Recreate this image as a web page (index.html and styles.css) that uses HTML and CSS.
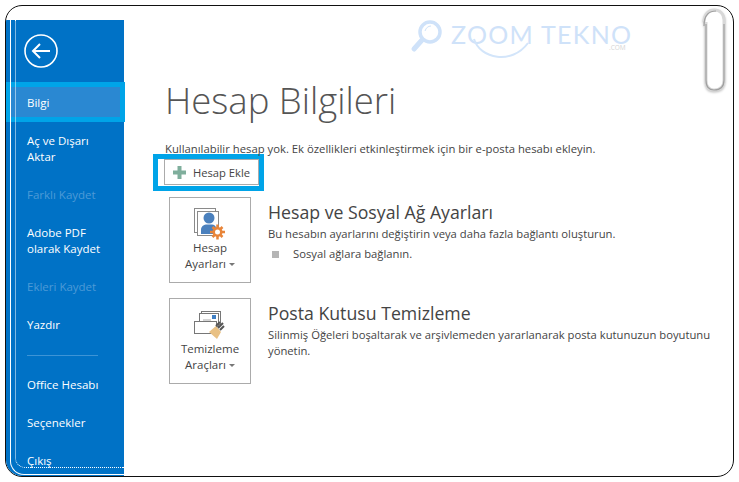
FILE: index.html
```html
<!DOCTYPE html>
<html lang="tr">
<head>
    <meta charset="UTF-8">
    <meta name="viewport" content="width=device-width, initial-scale=1.0">
    <title>Hesap Bilgileri</title>
    <link rel="stylesheet" href="styles.css">
</head>
<body>
    <div class="frame">
        <div class="window">
            <!-- sol menu -->
            <nav class="sidebar">
                <div class="back-area">
                    <svg class="back-icon" width="34" height="34" viewBox="0 0 34 34">
                        <circle cx="17" cy="17" r="16" fill="none" stroke="#fff" stroke-width="1.6"/>
                        <path d="M9 17H26M16 10L9 17L16 24" fill="none" stroke="#fff" stroke-width="2"/>
                    </svg>
                </div>
                <a class="nav-item active">Bilgi</a>
                <a class="nav-item tall">Aç ve Dışarı<br>Aktar</a>
                <a class="nav-item disabled">Farklı Kaydet</a>
                <a class="nav-item tall">Adobe PDF<br>olarak Kaydet</a>
                <a class="nav-item disabled">Ekleri Kaydet</a>
                <a class="nav-item">Yazdır</a>
                <div class="nav-divider"></div>
                <a class="nav-item">Office Hesabı</a>
                <a class="nav-item">Seçenekler</a>
                <a class="nav-item">Çıkış</a>
                <div class="edge-solid"></div>
                <div class="edge-dots"></div>
            </nav>

            <!-- icerik -->
            <main class="content">
                <h1 class="page-title">Hesap Bilgileri</h1>
                <p class="intro">Kullanılabilir hesap yok. Ek özellikleri etkinleştirmek için bir e-posta hesabı ekleyin.</p>
                <div class="add-highlight">
                    <button class="add-button">
                        <svg width="13" height="13" viewBox="0 0 13 13"><path d="M4.500 0H8.500V4.500H13V8.500H8.500V13H4.500V8.500H0V4.500H4.500Z" fill="#7fae9c"/></svg>
                        Hesap Ekle
                    </button>
                </div>

                <section class="block">
                    <div class="big-button">
                        <svg class="big-icon" width="32" height="32" viewBox="0 0 32 32">
                            <rect x="0.500" y="0.500" width="21" height="24" fill="#fff" stroke="#8a8a8a"/>
                            <rect x="3.500" y="3.500" width="21" height="24" fill="#fff" stroke="#8a8a8a"/>
                            <circle cx="15" cy="10" r="5.500" fill="#4a80bd"/>
                            <path d="M7 26V22C7 18 10 16.500 13 16.500H18C20 16.500 22 18 22 20V26Z" fill="#4a80bd"/>
                            <path d="M23.500 16.500V31.500M16 24H31M18.500 19L28.500 29M28.500 19L18.500 29" stroke="#e8853a" stroke-width="2.500"/>
                            <circle cx="23.500" cy="24" r="5" fill="#e8853a"/>
                            <circle cx="23.500" cy="24" r="2.500" fill="#fff"/>
                        </svg>
                        <span class="big-label">Hesap<br>Ayarları<i class="caret"></i></span>
                    </div>
                    <div class="block-text">
                        <h2>Hesap ve Sosyal Ağ Ayarları</h2>
                        <p>Bu hesabın ayarlarını değiştirin veya daha fazla bağlantı oluşturun.</p>
                        <div class="bullet-row"><span class="bullet"></span>Sosyal ağlara bağlanın.</div>
                    </div>
                </section>

                <section class="block">
                    <div class="big-button">
                        <svg class="big-icon" width="32" height="32" viewBox="0 0 32 32">
                            <rect x="7.500" y="2.500" width="19" height="13" fill="#fff" stroke="#777"/>
                            <rect x="5.500" y="4.500" width="19" height="13" fill="#fff" stroke="#777"/>
                            <rect x="18" y="6" width="4" height="4" fill="#3f7fc4"/>
                            <path d="M9 11H17M9 13.500H13" stroke="#aaa"/>
                            <rect x="0.500" y="12.500" width="22" height="12" fill="#fff" stroke="#777"/>
                            <path d="M15 23L22 17L27 23L23 30Z" fill="#e9c184"/>
                            <path d="M22 17L26 13M24 19L29 14M26 21L30 17" stroke="#555" stroke-width="2"/>
                        </svg>
                        <span class="big-label">Temizleme<br>Araçları<i class="caret"></i></span>
                    </div>
                    <div class="block-text">
                        <h2>Posta Kutusu Temizleme</h2>
                        <p>Silinmiş Öğeleri boşaltarak ve arşivlemeden yararlanarak posta kutunuzun boyutunu yönetin.</p>
                    </div>
                </section>
            </main>
        </div>

        <!-- filigran -->
        <div class="watermark">
            <svg class="wm-mark" width="34" height="34" viewBox="0 0 34 34">
                <circle cx="20" cy="13" r="10" fill="none" stroke="#cfe2f9" stroke-width="3.500"/>
                <path d="M12 21L4 30" stroke="#cfe2f9" stroke-width="5" stroke-linecap="round"/>
                <path d="M15 12C16 9 18 7 21 7" fill="none" stroke="#cfe2f9" stroke-width="1"/>
            </svg>
            <span class="wm-text">ZOOM TEKNO</span>
            <span class="wm-com">.COM</span>
            <svg class="wm-swoosh" width="64" height="24" viewBox="0 0 64 24"><path d="M2 2C8 22 40 28 56 6" fill="none" stroke="#d3e5fa" stroke-width="2"/></svg>
        </div>

        <!-- atas -->
        <svg class="clip" width="26" height="86" viewBox="0 0 26 86">
            <path d="M3 14C3 6 8 2 13 2C19 2 23 6 23 12L23 72C23 79 19 82 13 82C8 82 5 79 5 72L5 14" fill="#fff" stroke="#d8d8d8" stroke-width="3"/>
            <path d="M23 16L23 72C23 79 19 82 13 82C8 82 5 79 5 72L5 16" fill="none" stroke="#a0a0a0" stroke-width="1.200"/>
            <path d="M3 18C3 6 9 3 15 3" fill="none" stroke="#a0a0a0" stroke-width="1.200"/>
        </svg>
    </div>
</body>
</html>
```

FILE: styles.css
```css
* {
    margin: 0;
    padding: 0;
    box-sizing: border-box;
    font-family: "Open Sans", "Noto Sans", sans-serif;
}

body {
    background: #fff;
    color: #444;
    width: 739px;
    height: 482px;
    overflow: hidden;
}

.frame {
    position: relative;
    width: 729px;
    height: 472px;
    margin: 5px 0 0 5px;
    padding-top: 14px;
    border: 1px solid #111;
    border-radius: 17px;
    overflow: hidden;
    background: #fff;
}

.window {
    display: flex;
    height: 100%;
}

/* sol menu */
.sidebar {
    position: relative;
    flex: 0 0 118px;
    min-width: 0;
    background: #0072c6;
    color: #fff;
    font-size: 11.5px;
}

.back-area {
    height: 62px;
    padding: 14px 0 0 18px;
}

.back-icon {
    display: block;
}

.nav-item {
    display: block;
    height: 38px;
    padding-left: 21px;
    line-height: 38px;
    white-space: nowrap;
}

.nav-item.tall {
    height: 54px;
    padding-top: 11px;
    line-height: 16px;
}

.nav-item.disabled {
    color: #4d9ad6;
}

.nav-item.active {
    width: 119px;
    height: 40px;
    background: #2a88d2;
    border: 5px solid #00a4e8;
    padding-left: 16px;
    line-height: 31px;
}

.nav-divider {
    width: 71px;
    height: 1px;
    margin: 11px 0 10px 21px;
    background: #3d94d6;
}

.edge-solid {
    position: absolute;
    left: 4px;
    top: 0;
    right: 0;
    bottom: 1px;
    border-left: 1px solid #fff;
    border-bottom: 1px solid #fff;
    border-bottom-left-radius: 14px;
    pointer-events: none;
}

.edge-dots {
    position: absolute;
    left: 9px;
    top: 0;
    right: 0;
    bottom: 8px;
    border-left: 1px dotted #fff;
    border-bottom: 1px dotted #fff;
    border-bottom-left-radius: 10px;
    pointer-events: none;
}

/* icerik */
.content {
    flex: 1;
    padding: 55px 0 0 41px;
}

.page-title {
    font-size: 36.5px;
    font-weight: 300;
    line-height: 50px;
    color: #555;
}

.intro {
    margin-top: 16px;
    font-size: 11.3px;
    line-height: 16px;
}

.add-highlight {
    width: 111px;
    height: 37px;
    margin: -3px 0 0 -12px;
    padding-left: 6px;
    border: 5px solid #00a4e8;
    background: #fff;
}

.add-button {
    display: flex;
    align-items: center;
    gap: 7px;
    width: 95px;
    height: 26px;
    padding-left: 8px;
    border: 1px solid #ababab;
    background: #fff;
    color: #444;
    font-size: 11.2px;
}

.block {
    display: flex;
    margin: 6px 0 15px 4px;
}

.big-button {
    display: flex;
    flex-direction: column;
    align-items: center;
    flex: 0 0 82px;
    height: 86px;
    padding-top: 10px;
    border: 1px solid #ababab;
    font-size: 11.5px;
    text-align: center;
}

.big-icon {
    display: block;
}

.big-label {
    line-height: 16px;
    color: #444;
}

.caret {
    display: inline-block;
    margin-left: 3px;
    vertical-align: middle;
    border-left: 3px solid transparent;
    border-right: 3px solid transparent;
    border-top: 3px solid #777;
}

.block-text {
    width: 445px;
    margin-left: 17px;
    font-size: 11.25px;
    line-height: 16px;
}

.block-text h2 {
    margin-top: 2px;
    margin-bottom: 1px;
    font-size: 17.7px;
    font-weight: 400;
    line-height: 26px;
    color: #444;
}

.bullet-row {
    display: flex;
    align-items: center;
    margin-top: 4px;
}

.bullet {
    width: 7px;
    height: 7px;
    margin: 0 14px 0 4px;
    background: #b5b5b5;
}

/* filigran ve atas */
.watermark {
    position: absolute;
    left: 404px;
    top: 13px;
    width: 220px;
    height: 44px;
}

.wm-mark {
    position: absolute;
    left: 0;
    top: 0;
}

.wm-text {
    position: absolute;
    left: 41px;
    top: 6px;
    font-family: "Lato", sans-serif;
    font-size: 25px;
    font-weight: 400;
    line-height: 18px;
    letter-spacing: 1.3px;
    white-space: nowrap;
    color: #cfe2f9;
}

.wm-com {
    position: absolute;
    left: 199px;
    top: 25px;
    font-size: 6.5px;
    line-height: 7px;
    color: #d5d5d5;
}

.wm-swoosh {
    position: absolute;
    left: 62px;
    top: 18px;
}

.clip {
    position: absolute;
    left: 695px;
    top: 2px;
    filter: drop-shadow(0 1px 1px rgba(0, 0, 0, 0.25));
}
```
